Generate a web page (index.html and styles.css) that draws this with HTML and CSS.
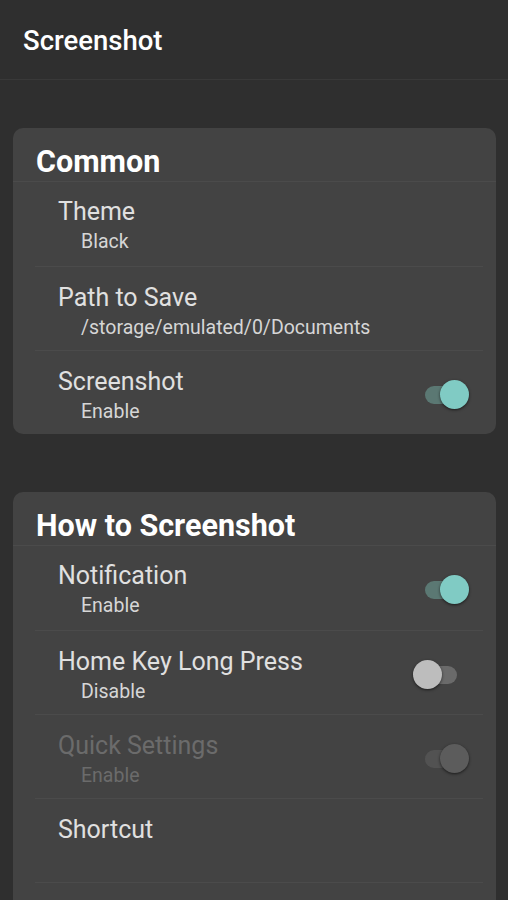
FILE: index.html
```html
<!DOCTYPE html>
<html lang="en">
<head>
  <meta charset="UTF-8">
  <meta name="viewport" content="width=device-width, initial-scale=1.0">
  <title>Screenshot</title>
  <link rel="stylesheet" href="styles.css">
</head>
<body>
  <div class="appbar">Screenshot</div>

  <div class="content">
    <div class="card">
      <div class="card-title">Common</div>
      <div class="row">
        <div class="text">
          <div class="label">Theme</div>
          <div class="sub">Black</div>
        </div>
      </div>
      <div class="row">
        <div class="text">
          <div class="label">Path to Save</div>
          <div class="sub">/storage/emulated/0/Documents</div>
        </div>
      </div>
      <div class="row">
        <div class="text">
          <div class="label">Screenshot</div>
          <div class="sub">Enable</div>
        </div>
        <div class="switch on"><span class="track"></span><span class="thumb"></span></div>
      </div>
    </div>

    <div class="card">
      <div class="card-title">How to Screenshot</div>
      <div class="row">
        <div class="text">
          <div class="label">Notification</div>
          <div class="sub">Enable</div>
        </div>
        <div class="switch on"><span class="track"></span><span class="thumb"></span></div>
      </div>
      <div class="row">
        <div class="text">
          <div class="label">Home Key Long Press</div>
          <div class="sub">Disable</div>
        </div>
        <div class="switch off"><span class="track"></span><span class="thumb"></span></div>
      </div>
      <div class="row disabled">
        <div class="text">
          <div class="label">Quick Settings</div>
          <div class="sub">Enable</div>
        </div>
        <div class="switch on"><span class="track"></span><span class="thumb"></span></div>
      </div>
      <div class="row">
        <div class="text">
          <div class="label">Shortcut</div>
        </div>
      </div>
      <div class="row stub"></div>
    </div>
  </div>
</body>
</html>
```

FILE: styles.css
```css
* {
  box-sizing: border-box;
}
body {
  margin: 0;
  background-color: #2f2f2f;
  font-family: Roboto, "Noto Sans", sans-serif;
  color: #e6e6e6;
  height: 900px;
  overflow: hidden;
}
.appbar {
  height: 80px;
  padding-left: 23px;
  padding-top: 25px;
  font-size: 27.5px;
  line-height: 32px;
  font-weight: 500;
  color: #ffffff;
  border-bottom: 1px solid #393939;
}
.content {
  padding: 48px 12px 0 13px;
}
.card {
  background-color: #434343;
  border-radius: 10px;
  margin-bottom: 58px;
  overflow: hidden;
}
.card-title {
  height: 54px;
  padding-left: 23px;
  padding-top: 16px;
  font-size: 30.5px;
  line-height: 36px;
  font-weight: 700;
  color: #ffffff;
  border-bottom: 1px solid #4b4b4b;
}
.row {
  height: 84px;
  margin: 0 13px 0 22px;
  padding: 16px 14px 0 23px;
  display: flex;
  align-items: center;
  justify-content: space-between;
  border-top: 1px solid #4b4b4b;
}
.card-title + .row {
  border-top: none;
  padding-top: 15px;
}
.row.stub {
  height: 40px;
}
.text {
  align-self: flex-start;
}
.label {
  font-size: 25px;
  color: #e0e0e0;
  line-height: 30px;
}
.sub {
  font-size: 19.5px;
  line-height: 24px;
  color: #d6d6d6;
  padding-left: 23px;
  margin-top: 3px;
}
.disabled .label,
.disabled .sub {
  color: #6b6b6b;
}
.switch {
  position: relative;
  width: 48px;
  height: 30px;
  margin-top: -12px;
}
.track {
  position: absolute;
  left: 4px;
  top: 6px;
  width: 38px;
  height: 18px;
  border-radius: 9px;
  background-color: #5b7873;
}
.thumb {
  position: absolute;
  top: 0;
  width: 29px;
  height: 29px;
  border-radius: 50%;
  background-color: #80cbc4;
  box-shadow: 0 1px 3px rgba(0, 0, 0, 0.6);
}
.on .thumb {
  right: 0;
}
.off .track {
  background-color: #6a6a6a;
  left: 0;
  width: 36px;
}
.off .thumb {
  left: -8px;
  background-color: #bdbdbd;
}
.disabled .track {
  background-color: #525252;
}
.disabled .thumb {
  background-color: #5c5c5c;
}
```
